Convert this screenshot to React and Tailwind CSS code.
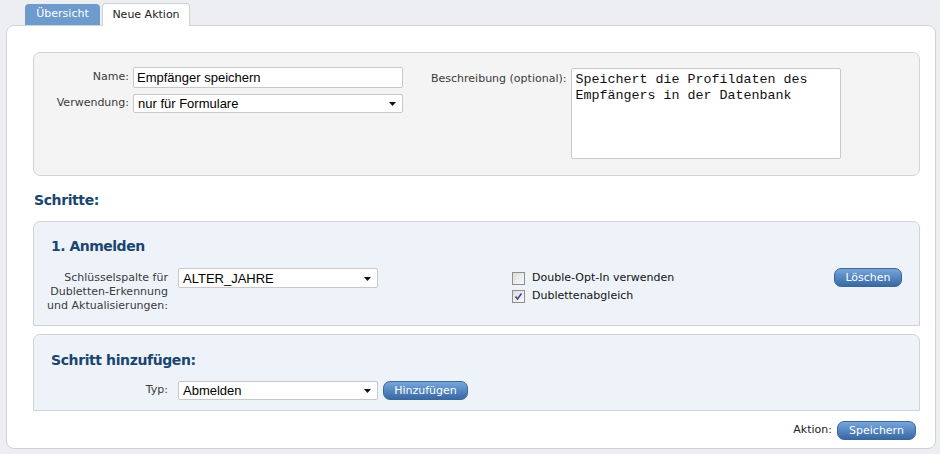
import React from 'react';

const LABEL = "text-[#3a3a3a]";

function FakeSelect({ value, className = '' }) {
  return (
    <div className={`flex items-center justify-between rounded-[2px] border border-[#c8c8c8] bg-white pl-[4px] pr-[6px] font-['Liberation_Sans',Arial,sans-serif] text-[13px] text-black ${className}`}>
      <span className="leading-none">{value}</span>
      <svg width="7" height="4" viewBox="0 0 7 4" className="mt-px">
        <path d="M0 0h7L3.5 4z" fill="#111" />
      </svg>
    </div>
  );
}

function Button({ children, className = '' }) {
  return (
    <button className={`flex h-[19px] items-center justify-center rounded-[7px] border border-[#3a679d] bg-gradient-to-b from-[#79a6d9] via-[#5587c2] to-[#3a69a2] text-[11px] leading-none text-white ${className}`}>
      {children}
    </button>
  );
}

function Checkbox({ checked, label }) {
  return (
    <label className="flex h-[18px] items-center gap-[7px] text-[#111]">
      <span className="flex h-[13px] w-[13px] items-center justify-center border border-[#8e8e8e] bg-gradient-to-br from-[#dcdcdc] to-[#fafafa]">
        {checked && (
          <svg width="9" height="9" viewBox="0 0 9 9">
            <path d="M1.5 4.5l2 2.5L7.5 1.5" fill="none" stroke="#3b4c8c" strokeWidth="1.6" />
          </svg>
        )}
      </span>
      {label}
    </label>
  );
}

export default function App() {
  return (
    <div className="h-[454px] w-[940px] bg-[#eceef1] font-['DejaVu_Sans',Verdana,sans-serif] text-[11px]">
      <div className="flex h-[25px] items-end gap-[2px] pl-[25px]">
        <div className="flex h-[21px] w-[75px] items-center justify-center rounded-t-[4px] bg-[#6d9bcd] text-white">
          Übersicht
        </div>
        <div className="relative z-10 -mb-px flex h-[23px] w-[88px] items-center justify-center rounded-t-[4px] border border-b-0 border-[#cfd1d4] bg-white text-[#222]">
          Neue Aktion
        </div>
      </div>

      <div className="ml-[6px] flex h-[424px] w-[930px] flex-col rounded-[8px] border border-[#d0d2d5] bg-white pl-[26px] pr-[15px] pt-[26px]">
        {/* Stammdaten */}
        <div className="flex h-[124px] rounded-[7px] border border-[#d4d4d4] bg-[#f4f4f4] pt-[14px]">
          <div className="grid grid-cols-[95px_270px] content-start items-center gap-x-[4px] gap-y-[6px]">
            <span className={`text-right ${LABEL}`}>Name:</span>
            <div className="flex h-[21px] items-center rounded-[2px] border border-[#c8c8c8] bg-white pl-[3px] font-['Liberation_Sans',Arial,sans-serif] text-[13px] text-black">
              Empfänger speichern
            </div>
            <span className={`text-right ${LABEL}`}>Verwendung:</span>
            <FakeSelect value="nur für Formulare" className="h-[19px]" />
          </div>
          <div className="ml-[28px] mt-px flex items-start gap-[5px]">
            <span className={`pt-[3px] ${LABEL}`}>Beschreibung (optional):</span>
            <div className="h-[91px] w-[270px] rounded-[2px] border border-[#c8c8c8] bg-white px-[3px] pt-[3px] font-['Liberation_Mono','Courier_New',monospace] text-[13.33px] leading-[16px] text-[#111]">
              Speichert die Profildaten des
              <br />
              Empfängers in der Datenbank
            </div>
          </div>
        </div>

        <h2 className="ml-[1px] mt-[16px] text-[14px] font-bold leading-[16px] tracking-[-0.4px] text-[#1a4570]">Schritte:</h2>

        {/* Schritt 1 */}
        <div className="mt-[13px] h-[105px] rounded-t-[7px] border border-[#cfd2d6] bg-[#eef3fa] px-[17px] pt-[16px]">
          <h3 className="text-[14px] font-bold leading-[16px] tracking-[-0.5px] text-[#1a4570]">1. Anmelden</h3>
          <div className="-ml-[17px] mt-[14px] flex items-start">
            <div className={`mt-[3px] w-[134px] whitespace-nowrap text-right leading-[14px] ${LABEL}`}>
              Schlüsselspalte für
              <br />
              Dubletten-Erkennung
              <br />
              und Aktualisierungen:
            </div>
            <FakeSelect value="ALTER_JAHRE" className="ml-[10px] h-[20px] w-[200px]" />
            <div className="ml-[134px] mt-px flex flex-col">
              <Checkbox label="Double-Opt-In verwenden" />
              <Checkbox checked label="Dublettenabgleich" />
            </div>
            <Button className="ml-auto w-[68px]">Löschen</Button>
          </div>
        </div>

        {/* Schritt hinzufügen */}
        <div className="mt-[8px] h-[77px] rounded-t-[7px] border border-[#cfd2d6] bg-[#eef3fa] px-[17px] pt-[17px]">
          <h3 className="text-[14px] font-bold leading-[16px] tracking-[-0.4px] text-[#1a4570]">Schritt hinzufügen:</h3>
          <div className="-ml-[17px] mt-[13px] flex items-center">
            <span className={`w-[134px] text-right ${LABEL}`}>Typ:</span>
            <FakeSelect value="Abmelden" className="ml-[10px] h-[19px] w-[200px]" />
            <Button className="ml-[5px] w-[85px]">Hinzufügen</Button>
          </div>
        </div>

        <div className="mt-[10px] flex items-center justify-end gap-[5px] pr-[4px]">
          <span className="text-[#222]">Aktion:</span>
          <Button className="w-[79px]">Speichern</Button>
        </div>
      </div>
    </div>
  );
}
